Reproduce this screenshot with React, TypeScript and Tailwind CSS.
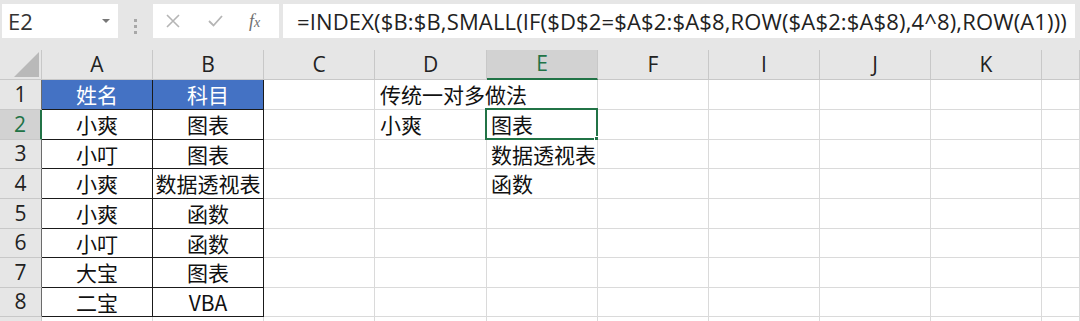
import React from 'react';

const COLS = [
  { key: 'A', w: 'w-[111px]' },
  { key: 'B', w: 'w-[111px]' },
  { key: 'C', w: 'w-[111px]' },
  { key: 'D', w: 'w-[112px]' },
  { key: 'E', w: 'w-[111px]' },
  { key: 'F', w: 'w-[111px]' },
  { key: 'I', w: 'w-[111px]' },
  { key: 'J', w: 'w-[111px]' },
  { key: 'K', w: 'w-[111px]' },
  { key: '', w: 'flex-1' },
];

const ROW_H = ['h-[30px]', 'h-[30px]', 'h-[29px]', 'h-[30px]', 'h-[30px]', 'h-[29px]', 'h-[30px]', 'h-[29px]'];

type Row = { A?: string; B?: string; D?: string; E?: string };

const rows: Row[] = [
  { A: '姓名', B: '科目', D: '传统一对多做法' },
  { A: '小爽', B: '图表', D: '小爽', E: '图表' },
  { A: '小叮', B: '图表', E: '数据透视表' },
  { A: '小爽', B: '数据透视表', E: '函数' },
  { A: '小爽', B: '函数' },
  { A: '小叮', B: '函数' },
  { A: '大宝', B: '图表' },
  { A: '二宝', B: 'VBA' },
];

const cellFont = { fontFamily: '"Noto Sans CJK SC", "Liberation Sans", sans-serif' };
const uiFont = { fontFamily: '"Open Sans", "Liberation Sans", sans-serif' };

function FormulaBar() {
  return (
    <div className="flex h-[50px] bg-[#e6e6e6] pl-[2px] pt-[4px] pr-[5px]">
      <div className="flex h-[34px] w-[116px] items-center justify-between bg-white pl-[6px] pr-[8px]">
        <span className="text-[22px] text-[#333]" style={uiFont}>E2</span>
        <svg width="8" height="5" viewBox="0 0 8 5"><path d="M0 0h8L4 4z" fill="#777" /></svg>
      </div>
      <div className="flex w-[35px] flex-col items-center justify-center gap-[3px] pb-[2px]">
        <span className="h-[3px] w-[3px] bg-[#a8a8a8]" />
        <span className="h-[3px] w-[3px] bg-[#a8a8a8]" />
        <span className="h-[3px] w-[3px] bg-[#a8a8a8]" />
      </div>
      <div className="flex h-[34px] w-[126px] items-center bg-white">
        <svg className="ml-[13px]" width="14" height="14" viewBox="0 0 14 14">
          <path d="M1 1l12 12M13 1L1 13" stroke="#b5b5b5" strokeWidth="1.6" fill="none" />
        </svg>
        <svg className="ml-[28px]" width="15" height="12" viewBox="0 0 15 12">
          <path d="M1 6l4.5 4.5L14 1" stroke="#b5b5b5" strokeWidth="1.8" fill="none" />
        </svg>
        <span
          className="ml-[26px] text-[18px] italic text-[#6f6f6f]"
          style={{ fontFamily: '"Liberation Serif", serif' }}
        >
          f<span className="text-[14px]">x</span>
        </span>
      </div>
      <div className="ml-[4px] flex h-[34px] flex-1 items-center bg-white pl-[14px]">
        <span className="whitespace-nowrap text-[22px] tracking-[0.15px] text-[#222]" style={uiFont}>
          =INDEX($B:$B,SMALL(IF($D$2=$A$2:$A$8,ROW($A$2:$A$8),4^8),ROW(A1)))
        </span>
      </div>
    </div>
  );
}

function HeaderRow() {
  return (
    <div className="flex h-[30px] bg-[#e6e6e6]" style={uiFont}>
      <div className="flex w-[42px] items-end justify-end border-r border-b border-[#c8c8c8] pr-[2px] pb-[2px]">
        <svg width="25" height="25" viewBox="0 0 25 25"><path d="M25 0v25H0z" fill="#b9b9b9" /></svg>
      </div>
      {COLS.map((c) => {
        const sel = c.key === 'E';
        return (
          <div
            key={c.key || 'L'}
            className={`${c.w} flex items-center justify-center border-r text-[21px] ${
              sel
                ? 'border-b-2 border-r-[#c8c8c8] border-b-[#217346] bg-[#d2d2d2] text-[#217346]'
                : 'border-b border-[#c8c8c8] text-[#222]'
            }`}
          >
            {c.key}
          </div>
        );
      })}
    </div>
  );
}

function DataRow({ r, i }: { r: Row; i: number }) {
  const n = i + 1;
  const selRow = n === 2;
  return (
    <div className={`flex ${ROW_H[i]}`} style={cellFont}>
      <div
        className={`flex w-[42px] items-center justify-center border-b border-[#c8c8c8] text-[21px] ${
          selRow
            ? 'border-r-2 border-r-[#217346] bg-[#d2d2d2] text-[#217346]'
            : 'border-r border-r-[#6b6b6b] bg-[#e6e6e6] text-[#222]'
        }`}
        style={uiFont}
      >
        {n}
      </div>
      {COLS.map((c) => {
        const base = `${c.w} relative flex items-center border-r border-b text-[21px] leading-none whitespace-nowrap`;
        if (c.key === 'A' || c.key === 'B') {
          const head = n === 1;
          return (
            <div
              key={c.key}
              className={`${base} justify-center border-[#1a1a1a] ${
                head ? 'bg-[#4472c4] text-white' : 'bg-white text-[#111]'
              }`}
            >
              {r[c.key]}
            </div>
          );
        }
        if (c.key === 'D') {
          return (
            <div
              key="D"
              className={`${base} bg-white pl-[5px] text-[#111] ${
                r.D && n === 1 ? 'border-r-transparent border-b-[#dadada]' : 'border-[#dadada]'
              }`}
            >
              <span className="relative z-10">{r.D}</span>
            </div>
          );
        }
        if (c.key === 'E') {
          return (
            <div key="E" className={`${base} border-[#dadada] bg-white pl-[4px] text-[#111]`}>
              {r.E}
              {selRow && (
                <div className="pointer-events-none absolute top-[-2px] left-[-2px] right-[-1px] bottom-[-1px] border-2 border-[#217346]">
                  <div className="absolute right-[-5px] bottom-[-5px] h-[7px] w-[7px] border border-white bg-[#217346]" />
                </div>
              )}
            </div>
          );
        }
        return <div key={c.key || 'L'} className={`${base} border-[#dadada] bg-white`} />;
      })}
    </div>
  );
}

export default function App() {
  return (
    <div className="h-[321px] w-[1080px] overflow-hidden bg-white">
      <FormulaBar />
      <HeaderRow />
      {rows.map((r, i) => (
        <DataRow key={i} r={r} i={i} />
      ))}
      <div className="flex h-[10px]">
        <div className="w-[42px] border-r border-[#c8c8c8] bg-[#e6e6e6]" />
        {COLS.map((c) => (
          <div key={c.key || 'L'} className={`${c.w} border-r border-[#dadada]`} />
        ))}
      </div>
    </div>
  );
}
